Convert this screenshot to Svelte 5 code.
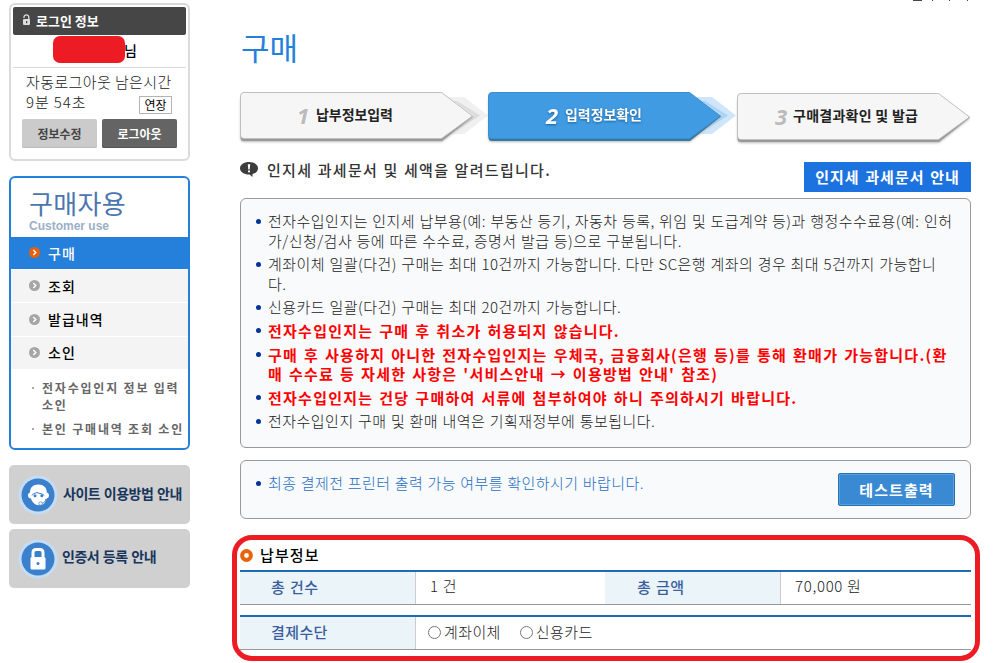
<script>
  const menu = [
    { label: '구매', active: true },
    { label: '조회' },
    { label: '발급내역' },
    { label: '소인' }
  ]

  const steps = [
    { num: 1, label: '납부정보입력', numX: 57, textX: 76, width: 77 },
    { num: 2, label: '입력정보확인', numX: 58, textX: 77, width: 77, active: true },
    { num: 3, label: '구매결과확인 및 발급', numX: 38, textX: 56, width: 125, last: true }
  ]

  const notices = [
    { lines: [
      '전자수입인지는 인지세 납부용(예: 부동산 등기, 자동차 등록, 위임 및 도급계약 등)과 행정수수료용(예: 인허',
      '가/신청/검사 등에 따른 수수료, 증명서 발급 등)으로 구분됩니다.'
    ] },
    { lines: [
      '계좌이체 일괄(다건) 구매는 최대 10건까지 가능합니다. 다만 SC은행 계좌의 경우 최대 5건까지 가능합니',
      '다.'
    ] },
    { lines: ['신용카드 일괄(다건) 구매는 최대 20건까지 가능합니다.'] },
    { red: true, lines: ['전자수입인지는 구매 후 취소가 허용되지 않습니다.'] },
    { red: true, lines: [
      '구매 후 사용하지 아니한 전자수입인지는 우체국, 금융회사(은행 등)를 통해 환매가 가능합니다.(환',
      "매 수수료 등 자세한 사항은 '서비스안내 → 이용방법 안내' 참조)"
    ] },
    { red: true, lines: ['전자수입인지는 건당 구매하여 서류에 첨부하여야 하니 주의하시기 바랍니다.'] },
    { lines: ['전자수입인지 구매 및 환매 내역은 기획재정부에 통보됩니다.'] }
  ]

  let method = $state('')
</script>

<div class="page">
  <aside>
    <section class="login">
      <h2>
        <svg width="9" height="12" viewBox="0 0 9 12">
          <path d="M2 4V3a2.400 2.200 0 0 1 4.800 0V6" fill="none" stroke="#ddd" stroke-width="1.3" />
          <rect x="1" y="5" width="7" height="6" rx="1" fill="#ddd" />
          <rect x="4" y="7" width="1.2" height="2.200" fill="#444" />
        </svg>
        로그인 정보
      </h2>
      <div class="user"><span class="mask"></span>님</div>
      <div class="timer">
        <p>자동로그아웃 남은시간</p>
        <div class="remain">
          <p>9분 54초</p>
          <button class="extend">연장</button>
        </div>
      </div>
      <div class="actions">
        <button class="edit">정보수정</button>
        <button class="logout">로그아웃</button>
      </div>
    </section>

    <nav>
      <h2>구매자용</h2>
      <span class="sub">Customer use</span>
      <ul class="menu">
        {#each menu as item}
          <li class:active={item.active}>
            <svg width="11" height="11" viewBox="0 0 11 11">
              <circle cx="5.5" cy="5.5" r="5.5" fill={item.active ? '#e8600a' : '#a6a6a6'} />
              <path d="M4.3 3l2.5 2.5L4.3 8" fill="none" stroke="#fff" stroke-width="1.4" />
            </svg>
            {item.label}
          </li>
        {/each}
      </ul>
      <ul class="extra">
        <li>전자수입인지 정보 입력<br>소인</li>
        <li>본인 구매내역 조회 소인</li>
      </ul>
    </nav>

    <div class="banner">
      <svg width="40" height="40" viewBox="0 0 40 40">
        <circle cx="20" cy="20" r="19.5" fill="#c5dcf5" />
        <circle cx="20" cy="20" r="16.5" fill="#3b80cc" />
        <path d="M12 17.500C12 12.500 15 9.500 20.300 9.500s8.500 3 8.500 8c1.600.5 2.200 1.500 2.200 3s-.8 2.700-2.400 2.900c-.6 2.600-1.900 4.700-3.800 6.100-2.500 1.200-5.500 1-7.700-.3-2-1.300-3.400-3.200-4.100-5.700-1.900-.1-3-1.300-3-3s.7-2.600 2-3z" fill="#fff" />
        <path d="M14 20.500c.3-2 2.500-1.800 5-3 2.500 1.200 6 1 7.300 3" fill="none" stroke="#3b80cc" stroke-width="1" />
        <circle cx="17" cy="20.800" r="1.500" fill="#3b80cc" />
        <circle cx="23.800" cy="20.800" r="1.500" fill="#3b80cc" />
        <path d="M28 24c-.6 2.400-1.700 3.700-3.800 4.200" fill="none" stroke="#3b80cc" />
        <circle cx="22.500" cy="28.500" r="1.700" fill="#fff" stroke="#3b80cc" stroke-width=".7" />
      </svg>
      <span>사이트 이용방법 안내</span>
    </div>
    <div class="banner cert">
      <svg width="40" height="40" viewBox="0 0 40 40">
        <circle cx="20" cy="20" r="19.5" fill="#c5dcf5" />
        <circle cx="20" cy="20" r="16.5" fill="#3b80cc" />
        <path d="M15 19v-5.500q0-3 3-3h4q3 0 3 3V19" fill="none" stroke="#fff" stroke-width="3" />
        <rect x="12.500" y="18" width="15" height="12.500" rx="1.500" fill="#fff" />
        <circle cx="20" cy="24.500" r="1.500" fill="#3b80cc" />
      </svg>
      <span>인증서 등록 안내</span>
    </div>
  </aside>

  <main>
    <h1>구매</h1>

    <div class="steps">
      {#each steps as step}
        <svg class="step" class:active={step.active} class:last={step.last} width="234" height="54" viewBox="0 0 234 54">
          {#if !step.last}
            <path class="chevron" d="M208 5h16l24 18.500L224 42h-16l24-18.500z" />
            <path class="chevron inner" d="M214 9h3l23 14.500L217 38h-3l20-14.500z" />
          {/if}
          <path class="shadow" d="M4 3h198l31 21.500L202 49H4q-3.500 0-3.500-3.500V6z" />
          <path class="shape" d="M4 .5h197.500l31 23.500-31 22.500H4Q.5 46.500 .5 43V4Q.5.5 4 .5z" />
          <text class="num" x={step.numX} y="32">{step.num}</text>
          <text class="label" x={step.textX} y="28" textLength={step.width}>{step.label}</text>
        </svg>
      {/each}
    </div>

    <div class="lead">
      <svg width="18" height="15" viewBox="0 0 18 15">
        <path d="M9 0c5 0 9 2.600 9 6.200 0 3-2.300 5-5.500 5.900L12.500 15 9.500 12.500C4 12.600 0 9.800 0 6.200 0 2.600 4 0 9 0z" fill="#3c3c3c" />
        <path d="M7.800 2.300h2.400L9.700 7.500H8.300z" fill="#fff" />
        <rect x="8" y="8.500" width="2" height="1.800" fill="#fff" />
      </svg>
      <p>인지세 과세문서 및 세액을 알려드립니다.</p>
      <button class="guide">인지세 과세문서 안내</button>
    </div>

    <ul class="box notices">
      {#each notices as notice}
        <li class:red={notice.red}>
          {#each notice.lines as line}
            <div>{line}</div>
          {/each}
        </li>
      {/each}
    </ul>

    <div class="box printer">
      <p>최종 결제전 프린터 출력 가능 여부를 확인하시기 바랍니다.</p>
      <button>테스트출력</button>
    </div>

    <section class="payment">
      <h3>
        <svg width="13" height="13" viewBox="0 0 13 13">
          <circle cx="6.500" cy="6.500" r="4.400" fill="#fff" stroke="#e8640a" stroke-width="4" />
        </svg>
        납부정보
      </h3>
      <div class="row">
        <div class="th">총 건수</div>
        <div class="td count">1 건</div>
        <div class="th second">총 금액</div>
        <div class="td">70,000 원</div>
      </div>
      <div class="row">
        <div class="th">결제수단</div>
        <div class="td radios">
          <label><input type="radio" value="account" bind:group={method}>계좌이체</label>
          <label><input type="radio" value="card" bind:group={method}>신용카드</label>
        </div>
      </div>
    </section>
  </main>

  <!-- lower edge of the breadcrumb, scrolled out at the top -->
  <svg class="crumb" width="58" height="2" viewBox="0 0 58 2">
    <path d="M0 .5h9M19 .5h1M36 .5h1M54 .5h1" stroke="#444" />
  </svg>
  <div class="highlight"></div>
</div>

<style>
  :global(body) {
    margin: 0;
    background: #fff;
  }
  .page {
    position: relative;
    display: flex;
    width: 995px;
    height: 663px;
    overflow: hidden;
    box-sizing: border-box;
    font-family: "Noto Sans CJK KR", sans-serif;
    font-size: 14px;
    color: #333;
    white-space: nowrap;
  }
  .page * {
    box-sizing: border-box;
  }
  h1, h2, h3, p, ul {
    margin: 0;
    padding: 0;
    list-style: none;
  }
  button {
    padding: 0;
    border: 0;
    font-family: inherit;
    white-space: nowrap;
  }
  svg {
    flex: none;
    display: block;
  }
  aside {
    width: 181px;
    margin: 3px 50px 0 9px;
    flex: none;
  }
  .login {
    height: 158px;
    border: 2px solid #dadada;
    border-radius: 6px;
    padding: 2px;
  }
  .login h2 {
    display: flex;
    align-items: center;
    gap: 5px;
    height: 28px;
    padding: 0 0 2px 9px;
    border-radius: 2px;
    background: #464646;
    color: #fff;
    font-size: 13px;
    font-weight: 700;
    letter-spacing: 0;
  }
  .user {
    display: flex;
    align-items: center;
    height: 33px;
    padding: 0 0 3px 40px;
    border-bottom: 1px solid #dadada;
    color: #001;
    font-weight: 500;
  }
  .mask {
    width: 72px;
    height: 27px;
    margin-right: -1px;
    border-radius: 7px;
    background: #ed1c24;
  }
  .timer {
    padding: 4px 14px 0 13px;
    color: #222;
    font-size: 15px;
    line-height: 20px;
    font-weight: 300;
    letter-spacing: 0.4px;
  }
  .remain {
    display: flex;
    justify-content: space-between;
  }
  .remain p {
    letter-spacing: 0.900px;
  }
  .extend {
    width: 33px;
    height: 18px;
    margin-top: 4px;
    border: 1px solid #b4b4b4;
    background: #fff;
    color: #000;
    font-size: 12px;
    line-height: 14px;
  }
  .actions {
    display: flex;
    gap: 5px;
    padding: 5px 0 0 9px;
  }
  .actions button {
    width: 75px;
    height: 29px;
    border-radius: 2px;
    font-size: 12px;
    font-weight: 700;
    line-height: 25px;
  }
  .edit {
    background: #cbcbcb;
    color: #444;
    box-shadow: inset 0 -1px #bbb;
  }
  .logout {
    background: #646464;
    color: #fff;
    box-shadow: inset 0 -1px #555;
  }
  nav {
    height: 274px;
    margin-top: 15px;
    border: 2px solid #2580dc;
    border-radius: 6px;
  }
  nav h2 {
    height: 42px;
    padding: 8px 0 0 18px;
    color: #4a77b0;
    font-size: 26px;
    font-weight: 400;
    line-height: 34px;
    letter-spacing: 0.3px;
  }
  .sub {
    display: block;
    height: 17px;
    padding-left: 18px;
    color: #9aafc8;
    font: bold 12px/12px "Liberation Sans", sans-serif;
  }
  .menu li {
    display: flex;
    align-items: center;
    gap: 8px;
    height: 32.400px;
    margin-bottom: 1px;
    padding: 0 0 1px 18px;
    background: #f4f4f4;
    color: #000;
    font-weight: 500;
    letter-spacing: 1px;
  }
  .menu .active {
    height: 32px;
    background: #2580dc;
    color: #fff;
  }
  .extra {
    padding: 9px 0 0 31px;
    color: #666;
    font-size: 12px;
    font-weight: 700;
    line-height: 17px;
    letter-spacing: 1.800px;
  }
  .extra li {
    position: relative;
    margin-bottom: 7px;
  }
  .extra li::before {
    content: '';
    position: absolute;
    left: -10px;
    top: 8px;
    width: 2px;
    height: 2px;
    background: #aaa;
  }
  .banner {
    display: flex;
    align-items: center;
    height: 59px;
    margin-top: 15px;
    padding: 1px 0 0 9px;
    border-radius: 5px;
    background: #d0d0d0;
    color: #17365d;
    font-size: 14px;
    font-weight: 700;
    letter-spacing: -0.500px;
  }
  .banner span {
    margin: -4px 0 0 5px;
    word-spacing: 1px;
  }
  .banner.cert {
    margin-top: 5px;
  }
  .banner.cert span {
    margin: -6px 0 0 4px;
  }

  main {
    width: 731px;
    flex: none;
  }
  h1 {
    height: 92px;
    padding: 24px 0 0 1px;
    color: #2580dc;
    font-size: 31px;
    font-weight: 400;
    line-height: 46px;
  }
  .steps {
    display: flex;
    gap: 14px;
    height: 54px;
  }
  .step {
    overflow: visible;
  }
  .step.last {
    margin: 1px 0 0 1px;
  }
  .shape {
    fill: #f6f6f6;
    stroke: #c0c0c0;
  }
  .shadow {
    fill: #999;
    filter: drop-shadow(0 1px 1px #bbb);
  }
  .chevron {
    fill: #f0f0f0;
  }
  .chevron.inner {
    fill: #dcdcdc;
  }
  .active .shape {
    fill: #409be3;
    stroke: #3b8fce;
  }
  .active .shadow {
    fill: #37799f;
  }
  .active .chevron {
    fill: #cfe5f9;
  }
  .active .chevron.inner {
    fill: #a9d2f5;
  }
  .num {
    fill: #bbb;
    font: italic bold 22px "Open Sans", sans-serif;
  }
  .label {
    fill: #222;
    font-size: 14px;
    font-weight: 700;
  }
  .active .num,
  .active .label {
    fill: #fff;
    filter: drop-shadow(0 1px 1px #1d6096);
  }
  .lead {
    display: flex;
    height: 46px;
    margin-top: 6px;
    padding-top: 10px;
  }
  .lead p {
    flex: 1;
    padding-left: 9px;
    font-size: 15px;
    font-weight: 500;
    line-height: 15px;
    letter-spacing: 1.300px;
    word-spacing: 0.700px;
  }
  .guide {
    width: 167px;
    height: 30px;
    background: #1c72df;
    color: #fff;
    font-size: 15px;
    font-weight: 700;
    line-height: 22px;
    letter-spacing: 1px;
    word-spacing: 1.300px;
  }
  .box {
    border: 1px solid #999;
    border-radius: 6px;
    background: #f9fafc;
  }
  .notices {
    height: 250px;
    padding: 12px 0 0 27px;
    color: #222;
    font-size: 15px;
    line-height: 20px;
    font-weight: 300;
    letter-spacing: 0.480px;
    word-spacing: 0.550px;
  }
  .notices li {
    position: relative;
    padding-bottom: 3px;
  }
  .notices li::before,
  .printer p::before {
    content: '';
    position: absolute;
    left: -12px;
    top: 8px;
    width: 5px;
    height: 5px;
    border-radius: 50%;
    background: #003399;
  }
  .notices .red {
    padding: 1px 0 4px;
    color: #f00;
    font-weight: 700;
    line-height: 19px;
    letter-spacing: 1.250px;
    word-spacing: 1.300px;
  }
  .printer {
    display: flex;
    justify-content: space-between;
    height: 59px;
    margin-top: 12px;
    padding: 12px 15px 0 27px;
  }
  .printer p {
    position: relative;
    color: #1f6fc4;
    font-size: 15px;
    font-weight: 300;
    line-height: 20px;
    letter-spacing: 0.470px;
    word-spacing: 0.400px;
  }
  .printer button {
    width: 117px;
    height: 33px;
    border: 1px solid #2473b9;
    border-radius: 2px;
    background: #3a8ad3;
    box-shadow: inset 0 0 0 1px #5a9edb;
    color: #fff;
    font-size: 15px;
    font-weight: 700;
    line-height: 25px;
    letter-spacing: 1.100px;
  }
  .payment {
    padding-top: 25px;
  }
  h3 {
    display: flex;
    align-items: center;
    gap: 7px;
    height: 22px;
    color: #000;
    font-size: 15px;
    font-weight: 500;
    line-height: 18px;
    letter-spacing: 1.100px;
  }
  .payment h3 {
    margin-bottom: 4px;
  }
  .row {
    display: flex;
    height: 35px;
    margin-bottom: 10px;
    border-top: 2px solid #1f6bb5;
    border-bottom: 1px solid #999;
    line-height: 30px;
  }
  .th {
    width: 176px;
    padding-left: 31px;
    border-right: 1px solid #ccc;
    background: #ebf4f9;
    color: #3a5f9f;
    font-size: 15px;
    font-weight: 500;
    letter-spacing: 0.400px;
    word-spacing: 1px;
  }
  .second {
    padding-left: 32px;
  }
  .td {
    padding-left: 14px;
    color: #222;
    font-size: 15px;
    font-weight: 300;
    letter-spacing: 0.700px;
    line-height: 28px;
  }
  .count {
    width: 189px;
  }
  .radios {
    display: flex;
    padding-left: 12px;
    letter-spacing: 0.400px;
  }
  .radios label {
    display: flex;
    align-items: center;
    height: 30px;
    margin-right: 20px;
  }
  .radios input {
    width: 13px;
    height: 13px;
    margin: 1px 3px 0 0;
  }
  .radios label + label {
    margin-left: -1px;
  }
  .crumb {
    position: absolute;
    left: 913px;
    top: 0;
  }
  .highlight {
    position: absolute;
    left: 232px;
    top: 535px;
    width: 748px;
    height: 126px;
    border: 5px solid #ed1c24;
    border-radius: 20px;
    pointer-events: none;
  }
</style>
